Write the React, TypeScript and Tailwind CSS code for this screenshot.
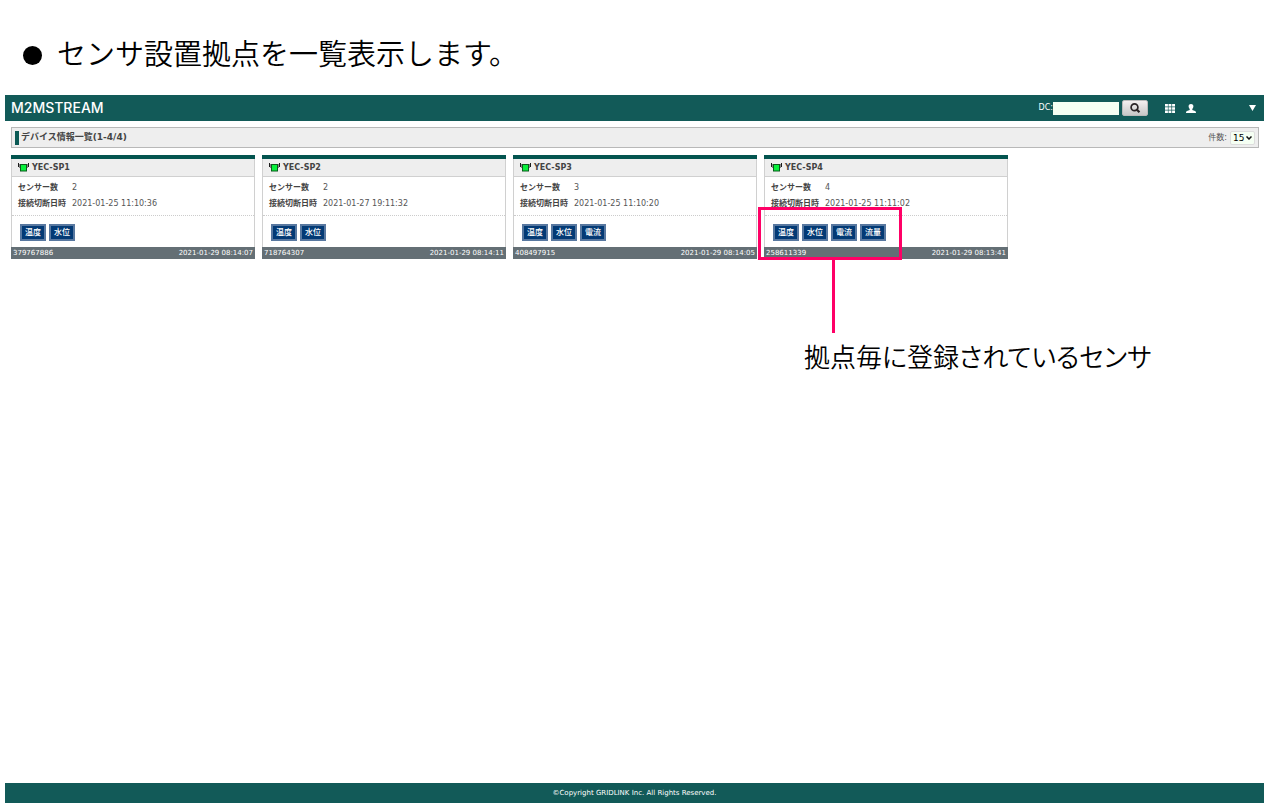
import React from "react";

type Device = {
  name: string;
  id: string;
  count: number;
  disconnected: string;
  updated: string;
  sensors: string[];
  note?: string;
};

const devices: Device[] = [
  { name: "YEC-SP1", id: "379767886", count: 2, disconnected: "2021-01-25 11:10:36", updated: "2021-01-29 08:14:07", sensors: ["温度", "水位"] },
  { name: "YEC-SP2", id: "718764307", count: 2, disconnected: "2021-01-27 19:11:32", updated: "2021-01-29 08:14:11", sensors: ["温度", "水位"] },
  { name: "YEC-SP3", id: "408497915", count: 3, disconnected: "2021-01-25 11:10:20", updated: "2021-01-29 08:14:05", sensors: ["温度", "水位", "電流"] },
  {
    name: "YEC-SP4",
    id: "258611339",
    count: 4,
    disconnected: "2021-01-25 11:11:02",
    updated: "2021-01-29 08:13:41",
    sensors: ["温度", "水位", "電流", "流量"],
    note: "拠点毎に登録されているセンサ",
  },
];

function DeviceIcon() {
  return (
    <svg width="11" height="9" viewBox="0 0 11 9" aria-hidden="true">
      <path d="M0 0h1v4H0zM1.500 1h1.500v4H1.500zM10 0h1v4h-1zM8 1h1.500v4H8z" fill="#1c1c1c" />
      <rect x="2.500" y="1.500" width="6" height="6.500" fill="#08f03c" stroke="#0a5a1c" />
    </svg>
  );
}

function SearchIcon() {
  return (
    <svg width="12" height="12" viewBox="0 0 12 12" fill="none" stroke="#2b2426" aria-hidden="true">
      <circle cx="5.5" cy="5.2" r="3.4" strokeWidth="1.7" />
      <path d="M8 7.700l2.400 2.600" strokeWidth="2.2" />
    </svg>
  );
}

function GridIcon() {
  return (
    <svg width="10" height="9" viewBox="0 0 10 9" fill="#fff" aria-hidden="true">
      <path d="M0 0h2.900v2.500H0zM3.500 0h2.900v2.500H3.500zM7.100 0H10v2.500H7.100zM0 3.200h2.900v2.500H0zM3.500 3.200h2.900v2.500H3.500zM7.100 3.200H10v2.500H7.100zM0 6.400h2.900v2.500H0zM3.500 6.400h2.900v2.500H3.500zM7.100 6.400H10v2.500H7.100z" />
    </svg>
  );
}

function UserIcon() {
  return (
    <svg width="10" height="9" viewBox="0 0 10 9" fill="#fff" aria-hidden="true">
      <path d="M5 0C6.700 0 7.500 1.100 7.400 2.600 7.300 3.900 6.700 4.600 6.300 5v1L9 7.100c.7.300 1 .8 1 1.900H0c0-1.100.3-1.600 1-1.900L3.700 6V5C3.300 4.600 2.700 3.900 2.600 2.600 2.500 1.100 3.300 0 5 0z" />
    </svg>
  );
}

function DeviceCard({ device }: { device: Device }) {
  return (
    <li className="relative w-[244px]">
      <article className="border-t-4 border-[#03544f]">
        <div className="border-x border-[#d0d0d0]">
          <h3 className="flex h-[18px] items-center gap-[3px] border-b border-[#d0d0d0] bg-[#eeeeee] pl-1.5 text-[8px] font-bold text-[#444]">
            <DeviceIcon />
            {device.name}
          </h3>
          <dl className="grid h-[39px] grid-cols-[54px_1fr] content-center border-b border-dotted border-[#ccc] pl-1.5 text-[8px] leading-4">
            <dt className="font-bold text-[#444]">センサー数</dt>
            <dd className="text-[#555]">{device.count}</dd>
            <dt className="font-bold text-[#444]">接続切断日時</dt>
            <dd className="text-[#555]">{device.disconnected}</dd>
          </dl>
          <div className="flex h-[31px] items-center gap-[3px] pt-px pl-2">
            {device.sensors.map((s) => (
              <button
                key={s}
                type="button"
                className="h-[17px] w-[26px] border-2 border-[#5878a0] bg-[#033a75] text-center text-[8px] leading-[13px] font-medium whitespace-nowrap text-white"
              >
                {s}
              </button>
            ))}
          </div>
        </div>
        <footer className="flex h-3 items-center justify-between bg-[#646f75] px-0.5 text-[7px] text-white">
          <span>{device.id}</span>
          <time>{device.updated}</time>
        </footer>
      </article>
      {device.note && (
        <div className="pointer-events-none absolute top-[52px] -left-1.5 text-black">
          <div className="h-[53px] w-36 border-[3px] border-[#ff0066]" />
          <div className="ml-[74px] h-[73px] w-[3px] bg-[#ff0066]" />
          <p className="ml-[46px] text-[26px] leading-[50px] font-[350] whitespace-nowrap [font-feature-settings:'palt']">{device.note}</p>
        </div>
      )}
    </li>
  );
}

export default function App() {
  return (
    <div className="flex min-h-screen flex-col bg-white pl-[5px] font-['DejaVu_Sans','Noto_Sans_CJK_JP',sans-serif]">
      <h1 className="flex h-[95px] items-center gap-[15px] pt-4 pl-[18px] text-[29px] leading-none font-[350] text-black">
        <span className="size-[19px] rounded-full bg-black" />
        センサ設置拠点を一覧表示します。
      </h1>

      <header className="flex h-[26px] items-center justify-between bg-[#125a58] pr-2 pl-1.5 text-white">
        <a href="#" className="font-[Inter,sans-serif] text-[14px] leading-none font-medium">M2MSTREAM</a>
        <div className="flex items-center">
          <label htmlFor="dc" className="text-[8px]">DC:</label>
          <input id="dc" type="text" className="h-[13px] w-[66px] bg-[#f5fff3] px-1 text-[8px] text-black" />
          <button
            type="button"
            aria-label="検索"
            className="ml-[3px] flex h-4 w-[26px] items-center justify-center rounded-xs border border-[#bbb] bg-linear-to-b from-[#f4f0f0] to-[#c8c8c8]"
          >
            <SearchIcon />
          </button>
          <button type="button" aria-label="一覧" className="ml-[17px]"><GridIcon /></button>
          <button type="button" aria-label="ユーザー" className="ml-[11px]"><UserIcon /></button>
          <button type="button" aria-label="メニュー" className="ml-[53px]">
            <svg width="7" height="6" viewBox="0 0 7 6" fill="#fff" aria-hidden="true"><path d="M0 0h7L3.500 6z" /></svg>
          </button>
        </div>
      </header>

      <main className="flex-1 pt-1.5 pr-[5px] pl-1.5">
        <div className="flex h-[21px] items-center justify-between border border-[#b8b8b8] bg-[#eeeeee] px-[3px]">
          <h2 className="flex items-center gap-0.5 text-[9px] leading-none font-bold text-[#444]">
            <span className="h-3.5 w-1 bg-[#0b5a55]" />
            デバイス情報一覧(1-4/4)
          </h2>
          <div className="flex items-center gap-[3px] text-[8px] text-[#555]">
            <label htmlFor="rows">件数:</label>
            <div className="relative flex items-center">
              <select id="rows" defaultValue="15" className="h-3.5 w-[25px] appearance-none rounded-xs border border-[#ddd] bg-[#f5fff3] pl-0.5 text-[9px] leading-3 text-black">
                <option>15</option>
                <option>30</option>
              </select>
              <svg className="pointer-events-none absolute right-[3px]" width="6" height="4" viewBox="0 0 6 4" fill="none" stroke="#111" strokeWidth="1.5" aria-hidden="true"><path d="M.5.5L3 3 5.500.5" /></svg>
            </div>
          </div>
        </div>
        <ul className="flex flex-wrap gap-[7px] pt-[7px]">
          {devices.map((d) => (
            <DeviceCard key={d.id} device={d} />
          ))}
        </ul>
      </main>

      <footer className="flex h-5 items-center justify-center bg-[#125a58] text-[7px] text-white">
        ©Copyright GRIDLINK Inc. All Rights Reserved.
      </footer>
    </div>
  );
}
